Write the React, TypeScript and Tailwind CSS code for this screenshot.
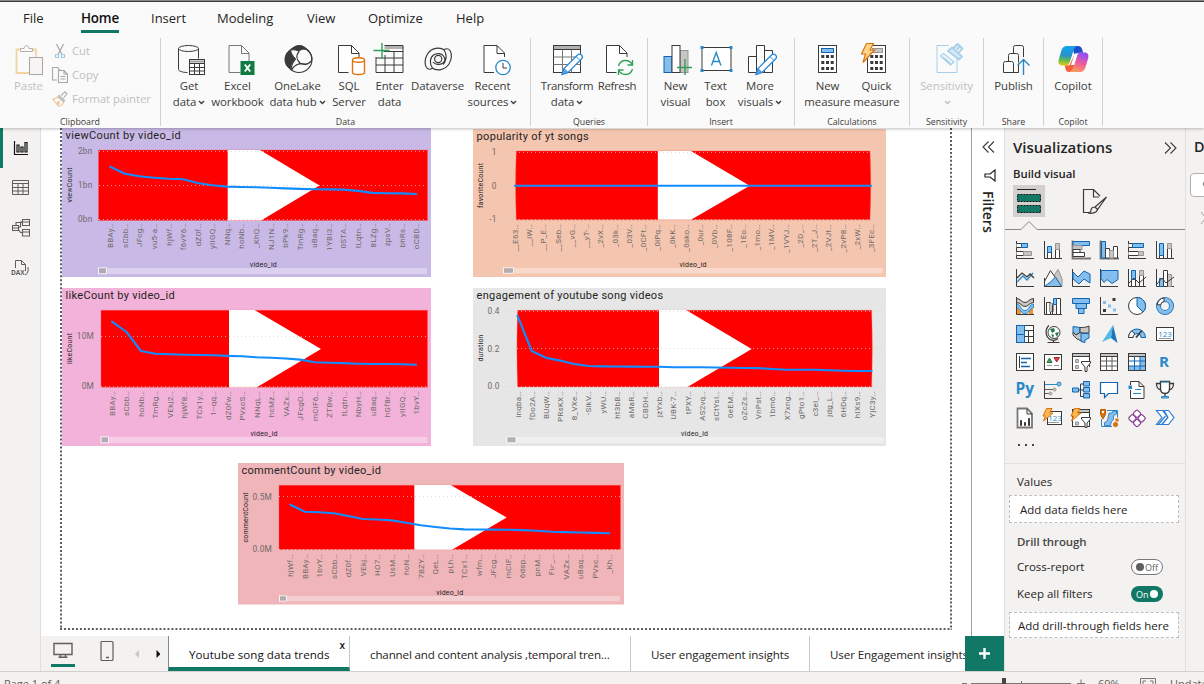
import React from "react";

type Pt = [number, number];

/* ------------------------------------------------------------------ */
/* Charts on the report page                                           */
/* ------------------------------------------------------------------ */

interface ChartProps {
  place: string;
  box: [number, number, number, number];
  bg: string;
  title: string;
  titleLen: number;
  titleAt: Pt;
  plot: string;
  white: string;
  grid: { from: number; to: number; ys: number[] };
  ticks: { x: number; labels: [string, number][] };
  yTitle: { text: string; x: number; y: number; len: number };
  start: number;
  step: number;
  ys: number[];
  cats: string[];
  catTop: number;
  xTitle: Pt;
  scroll: [number, number, number, number, number];
}

const chartFont = "Roboto, 'Open Sans', sans-serif";

function Chart(p: ChartProps) {
  const [x, y, w, h] = p.box;
  const line = p.ys.map((v, i) => `${p.start + i * p.step},${v}`).join(" ");
  const [sx, sy, sw, sh, tw] = p.scroll;
  return (
    <svg className={"absolute " + p.place} width={w} height={h} viewBox={`${x} ${y} ${w} ${h}`} fontFamily={chartFont}>
      <rect x={x} y={y} width={w} height={h} fill={p.bg} />
      <path d={p.plot} fill="#ff0000" stroke="#ff5a5a" strokeOpacity=".6" strokeWidth=".6" />
      <path d={p.white} fill="#fff" />
      <text x={p.titleAt[0]} y={p.titleAt[1]} fontSize="11" fill="#252423" textLength={p.titleLen}>
        {p.title}
      </text>
      {p.grid.ys.map((g) => (
        <line key={g} x1={p.grid.from} x2={p.grid.to} y1={g} y2={g} stroke="#d6d0d0" strokeOpacity=".75" strokeWidth="1" strokeDasharray="1 3" />
      ))}
      {p.ticks.labels.map(([t, ty]) => (
        <text key={t} x={p.ticks.x} y={ty} fontSize="8.3" textAnchor="end" fill="#6f6a69" letterSpacing=".2">
          {t}
        </text>
      ))}
      <text
        transform={`translate(${p.yTitle.x} ${p.yTitle.y}) rotate(-90)`}
        fontSize="7"
        textAnchor="middle"
        fill="#252423"
        textLength={p.yTitle.len}
      >
        {p.yTitle.text}
      </text>
      <polyline points={line} fill="none" stroke="#118dff" strokeWidth="2.100" strokeLinejoin="round" strokeLinecap="round" />
      {p.cats.map((c, i) => (
        <text
          key={c + i}
          transform={`translate(${p.start + i * p.step + 3} ${p.catTop}) rotate(-90)`}
          fontSize="8"
          textAnchor="end"
          fill="#6f6a69"
          letterSpacing=".25"
        >
          {c + "…"}
        </text>
      ))}
      <text x={p.xTitle[0]} y={p.xTitle[1]} fontSize="7" textAnchor="middle" fill="#252423" textLength="27">
        video_id
      </text>
      <rect x={sx} y={sy} width={sw} height={sh} fill="#fff" fillOpacity=".35" />
      <rect x={sx + 0.5} y={sy - 0.2} width={tw} height={sh} fill="#a8a5a8" fillOpacity=".85" stroke="#fff" strokeOpacity=".8" strokeWidth="1" />
    </svg>
  );
}

const charts: ChartProps[] = [
  {
    place: "left-[21px] top-0",
    box: [62, 128, 369, 149.3],
    bg: "#c8b9e6",
    title: "viewCount by video_id",
    titleLen: 115,
    titleAt: [65.6, 139],
    plot: "M98.5 150H427.5V220.5H98.5Z",
    white: "M227.7 150H260L319.5 185.5L261 220.5H227.7Z",
    grid: { from: 99, to: 427, ys: [151.5, 185.5, 219.5] },
    ticks: { x: 92.5, labels: [["2bn", 154.2], ["1bn", 188.2], ["0bn", 222.2]] },
    yTitle: { text: "viewCount", x: 72.3, y: 185, len: 35 },
    start: 110.3,
    step: 14.57,
    ys: [166.7, 173.8, 176.3, 177.7, 178.8, 179.3, 183, 185.2, 186.6, 187, 187.3, 187.7, 188.4, 188.9, 189.2, 189.4, 189.6, 190.9, 192.9, 193.2, 193.4, 194],
    cats: ["BBAy", "sCbb", "JFcg", "vu5-a", "hjWf", "f6vY6", "dZ0f", "yIIGQ", "NNq", "hoNb", "_KhQ", "NJ1N", "bPk9", "TmRg", "uBaq", "1YBI3", "0STA", "tLqtn", "8LZg", "zpsV", "bhRs", "oCBD"],
    catTop: 223,
    xTitle: [263.3, 267],
    scroll: [98, 268, 329, 6, 8],
  },
  {
    place: "left-[432px] top-[1px]",
    box: [473, 129, 413, 148],
    bg: "#f4c5af",
    title: "popularity of yt songs",
    titleLen: 112,
    titleAt: [476.6, 140],
    plot: "M516.3 151H870Q871.5 185 870 219.8H516.3Q514.8 185 516.3 151Z",
    white: "M657.8 151H691L749.7 185.7L691 219.8H657.8Z",
    grid: { from: 503, to: 884, ys: [152.5, 185.5, 219.5] },
    ticks: { x: 496.5, labels: [["1", 155], ["0", 188.8], ["-1", 222]] },
    yTitle: { text: "favoriteCount", x: 483.3, y: 185.5, len: 45 },
    start: 514.8,
    step: 14.25,
    ys: Array(26).fill(185.7),
    cats: ["__E63", "__iW", "__P_E", "__Seb", "__vG", "__yT-", "_2vX", "_03k", "_03V", "_0CFt", "_0iPq", "_0kK", "_0sko", "_0ur", "_0Vb", "_108F", "_1Eo", "_1mo", "_1MV", "_1VYJ", "_2D_", "_2T_J", "_2VJt", "_2vP8", "_2xW", "_3FEc"],
    catTop: 224,
    xTitle: [693, 267],
    scroll: [503, 268, 380, 5.5, 10],
  },
  {
    place: "left-[21px] top-[160px]",
    box: [62, 288, 369, 158],
    bg: "#f2b2d9",
    title: "likeCount by video_id",
    titleLen: 109,
    titleAt: [65.6, 299],
    plot: "M101 310.3H427.5V387.3H101Z",
    white: "M229 310H254.5L321 349L256.5 387.5H229Z",
    grid: { from: 101, to: 427, ys: [336.5, 386.5] },
    ticks: { x: 94, labels: [["10M", 339], ["0M", 389.3]] },
    yTitle: { text: "likeCount", x: 72.3, y: 348.5, len: 31 },
    start: 112,
    step: 14.48,
    ys: [321.7, 332, 351, 353.8, 354.3, 354.7, 355, 355.3, 355.9, 356.3, 357.3, 357.8, 358.5, 359.6, 362.3, 362.8, 363.1, 363.7, 364, 364, 364.2, 364.7],
    cats: ["BBAy", "sCbb", "hoNb", "TmRg", "VEkj2", "hjWf8", "TCx1y", "1--qq", "dZ0fw", "PVxcS", "NNqL", "hcMz", "VAZx", "JFcgO", "mClF6", "ZTBw", "tLqtn", "NbyH", "uBaq", "hGf8r", "yIIGQ", "1bvY"],
    catTop: 391,
    xTitle: [264, 436.3],
    scroll: [100.5, 437, 327, 6, 7.5],
  },
  {
    place: "left-[432px] top-[160px]",
    box: [473, 288, 413, 158],
    bg: "#e6e6e6",
    title: "engagement of youtube song videos",
    titleLen: 186.5,
    titleAt: [476.6, 299],
    plot: "M517.6 310.3H871.6Q873 349 871.6 387H517.6Q516.2 349 517.6 310.3Z",
    white: "M659 310H686L751.7 349L687 387.2H659Z",
    grid: { from: 505, to: 884, ys: [311.5, 348.5, 386.5] },
    ticks: { x: 499.5, labels: [["0.4", 314], ["0.2", 351.8], ["0.0", 389]] },
    yTitle: { text: "duration", x: 483, y: 348, len: 27 },
    start: 517.6,
    step: 14.16,
    ys: [316, 351, 357.7, 360.6, 364, 366, 366.4, 366.5, 366.6, 366.7, 366.8, 367.2, 367.3, 367.3, 367.5, 367.8, 368, 368.1, 369, 369.8, 369.8, 369.8, 370.3, 370.7, 371, 371],
    cats: ["inqba", "fDo2A", "BUqW", "PRsKX", "8_VXe", "-SikV", "yWU", "ht3bB", "aMaR", "CBDH", "jzYxb", "UBK-7", "tPXY", "AS2vq", "sCtYsI", "0eEM", "oZcZs", "VnPst", "1bm6", "X7xng", "gPto1", "c3eI_", "jdg_L", "6HDq", "hIXs9", "YjC3y"],
    catTop: 391,
    xTitle: [694.5, 436.3],
    scroll: [506.5, 437, 377, 6, 9],
  },
  {
    place: "left-[197px] top-[335px]",
    box: [238, 463, 386, 141.5],
    bg: "#efb5b9",
    title: "commentCount by video_id",
    titleLen: 139.5,
    titleAt: [241.5, 474],
    plot: "M279 485.3H620.5V549.5H279Z",
    white: "M414.3 485H450.7L506.7 517.6L452 549.7H414.3Z",
    grid: { from: 279, to: 620, ys: [496.5, 549.5] },
    ticks: { x: 272, labels: [["0.5M", 499.8], ["0.0M", 552]] },
    yTitle: { text: "commentCount", x: 248, y: 517.5, len: 50 },
    start: 290.3,
    step: 14.5,
    ys: [504.7, 511.7, 512.3, 513.3, 516, 519, 519.5, 520.4, 522.8, 525.3, 527, 528.5, 529.4, 529.5, 529.6, 529.8, 530.1, 530.7, 531.8, 532.1, 532.5, 532.9, 533.3],
    cats: ["hjWf", "BBAy", "1bvY", "sCbb", "dZ0f", "VEkj", "HO7", "UsM", "hoN", "7BZY", "QeL", "pLh", "TCx1", "wfm", "JFcg", "mClF", "6dsp", "pnM", "Fu-_", "VAZx", "uBaq", "PVxc", "_Kh"],
    catTop: 554,
    xTitle: [449.7, 595],
    scroll: [279, 596, 341, 5.3, 7],
  },
];

/* ------------------------------------------------------------------ */
/* Ribbon                                                              */
/* ------------------------------------------------------------------ */

function Big({ vb, children }: { vb: string; children: React.ReactNode }) {
  return (
    <svg className="h-8 w-8 shrink-0 overflow-visible" viewBox={vb} fill="none" stroke="#3b3a39" strokeWidth="1">
      {children}
    </svg>
  );
}

const Caret = () => (
  <svg className="mt-[1px] ml-[2px] inline-block h-[5px] w-[7px]" viewBox="0 0 7 5" fill="none" stroke="currentColor" strokeWidth="1.3">
    <path d="M1 1l2.5 2.5L6 1" />
  </svg>
);

function Tool({ w, icon, l1, l2, caret, faded }: { w: string; icon: React.ReactNode; l1: string; l2?: string; caret?: boolean; faded?: boolean }) {
  return (
    <div className={"flex shrink-0 flex-col items-center text-[11.4px] leading-4 tracking-[-0.05px] whitespace-nowrap " + w + (faded ? " text-[#c1c0bf]" : " text-[#3b3a39]")}>
      {icon}
      <div className={"mt-[3px] " + (l1 === "Transform" || l1 === "Refresh" ? "tracking-[-0.35px]" : "")}>{l1}</div>
      <div className="flex h-4 items-center justify-center">
        {l2}
        {caret && <Caret />}
      </div>
    </div>
  );
}

function Group({ w, pad, label, children }: { w: string; pad: string; label: string; children: React.ReactNode }) {
  return (
    <div className={"flex h-[88px] shrink-0 flex-col justify-between border-r border-[#d2d0ce] " + w}>
      <div className={"flex pt-[5px] " + pad}>{children}</div>
      <div className="-mb-px text-center text-[8.8px] leading-[10px] text-[#3b3a39]">{label}</div>
    </div>
  );
}

const doc = (x: number) => (
  <>
    <path d={`M${x} 45.5h13l7 7v20h-20z`} fill="#fff" stroke="none" />
    <path d={`M${x + 10} 72.5h-10v-27h13l7.5 7.5v4M${x + 13} 45.5v8h7.5`} />
  </>
);

const pencil = (x: number, y: number) => (
  <g transform={`translate(${x} ${y})`}>
    <path d="M0 21l2-6L15.500 1.500a2.600 2.600 0 0 1 4 4L6 19z" fill="#fff" stroke="#2b88d8" strokeWidth="1.3" />
    <path d="M0 21l2-6L6 19z" fill="#5ea5de" stroke="#2b88d8" />
    <path d="M14 3l4 4" stroke="#2b88d8" />
  </g>
);

const dots = (x: number, y: number) =>
  [0, 1, 2].map((r) => [0, 1, 2].map((c) => <rect key={`${r}${c}`} x={x + c * 4.7} y={y + r * 6} width="3" height="3" fill="#3b3a39" stroke="none" />));

const GetData = (
  <Big vb="173 43 32 32">
    <ellipse cx="188.500" cy="48.500" rx="10" ry="3" />
    <path d="M178.500 48.500v21c0 1.500 4 3 9 3M198.500 48.500v10" />
    <rect x="189.500" y="59.500" width="15" height="15" fill="#fff" />
    <path d="M190 61.500h14" stroke="#a19f9d" strokeWidth="2" />
    <path d="M189.500 63.500h15M189.500 67.500h15M189.500 71h15M194.500 63.500v11M199.500 63.500v11" />
  </Big>
);
const Excel = (
  <Big vb="221.500 43 32 32">
    <path d="M240 72.500h-11.500v-27h12.500l7.500 7.500v8M241 45.500v8h7.500" stroke="#797775" />
    <rect x="240" y="61" width="14" height="14" fill="#107c41" stroke="none" />
    <path d="M244.300 64.500l5.400 7M249.700 64.500l-5.400 7" stroke="#fff" strokeWidth="1.900" />
  </Big>
);
const OneLake = (
  <Big vb="281.500 43 32 32">
    <circle cx="298.500" cy="59.500" r="13" strokeWidth="1.100" />
    <path d="M290.500 50c2-3 5-4.500 8.500-4.500 3 0 6 1.500 7.500 4.500-3-1.500-6-1-8 1.500-2-1.500-5-2-8-1.500z" fill="#3b3a39" />
    <path d="M290 50c-4 2-5.500 6-5.500 9.500 0 4 2 8 5.500 9 0-4 1.500-7 5-9.500-3-3.500-4.500-6-5-9z" fill="#3b3a39" />
    <path d="M298.500 51.500c-3 3.500-3 8 1.500 12M306.500 50c4 3 5.500 6.500 4.500 11-4 4-8 4-11 2.500M295 59c-3 3-4 6-4.500 10.500M291 70.500c2-5 7-8 14-6.500" strokeWidth="1.200" />
  </Big>
);
const Sql = (
  <Big vb="333 43 32 32">
    {doc(338.5)}
    <path d="M352.500 60v12.500c0 1 2.500 2 6 2s6-1 6-2V60" fill="#fff" stroke="#e07412" strokeWidth="1.400" />
    <ellipse cx="358.500" cy="60" rx="6" ry="2.200" fill="#fff" stroke="#e07412" strokeWidth="1.400" />
  </Big>
);
const Enter = (
  <Big vb="373.500 43 32 32">
    <rect x="384" y="46" width="19" height="3" fill="#b3b0ad" stroke="none" />
    <path d="M384 45.500h18.500v27h-27V57M383 51.500h19.500M375.500 58h27M375.500 65h27M384.500 55v17.500M393.500 51.500v21" />
    <path d="M381.500 43v16M373 50.500h16" stroke="#2f9e57" strokeWidth="1.400" />
  </Big>
);
const Dataverse = (
  <Big vb="421.500 43 32 32">
    <g strokeWidth="1.200">
      <path d="M444 50c-5-3.500-13-2-17 4-3 5-3 10.500-1 13.500 1.500 2 4 2 6 .8" />
      <path d="M431.500 68c5 3.500 13 2 17-4 3-5 3-10.500 1-13.500-1.500-2-4-2-6-.8" />
      <path d="M432 68c-3-4-3-10 1-13 3.500-2.500 8-1.500 10 1 2 3 1.500 6.500-.5 8.500" />
      <path d="M443.500 50c3 4 3 10-1 13-3.500 2.500-8 1.500-10-1" />
      <circle cx="437.700" cy="59" r="3.600" />
    </g>
  </Big>
);
const Recent = (
  <Big vb="476.500 43 32 32">
    {doc(483.5)}
    <circle cx="502.500" cy="67.500" r="7.200" fill="#fff" stroke="#2b88c8" strokeWidth="1.300" />
    <path d="M502.500 63v5h4" />
  </Big>
);
const Transform = (
  <Big vb="551 43 32 32">
    <rect x="553.500" y="45.500" width="27" height="27" fill="#fff" />
    <rect x="554" y="46" width="26" height="3" fill="#b3b0ad" stroke="none" />
    <path d="M553.500 49.500h27" />
    <path d="M553.500 57h27M553.500 64.500h27M562.500 49.500v23M571.500 49.500v23" stroke="#797775" />
    {pencil(562, 53.5)}
  </Big>
);
const Refresh = (
  <Big vb="601 43 32 32">
    {doc(606.5)}
    <circle cx="625.500" cy="67.500" r="8" fill="#fafafa" stroke="none" />
    <path d="M618.500 66c1-3.500 4-5.500 7-5.500 3 0 5.500 1.500 7 4.500M632.500 60v5h-5M632.500 69c-1 3.500-4 5.500-7 5.500-3 0-5.500-1.500-7-4.500M618.500 75v-5h5" stroke="#2f9e57" strokeWidth="1.300" />
  </Big>
);
const NewVisual = (
  <Big vb="659.500 43 32 32">
    <rect x="663.500" y="56.500" width="8" height="16" fill="#83beec" stroke="#1264b0" />
    <rect x="679.500" y="50.500" width="8" height="22" fill="#c8c6c4" stroke="#979593" />
    <rect x="671.500" y="45.500" width="8" height="27" fill="#fff" />
    <path d="M684.500 59v16M676.500 67.500h15" stroke="#2f9e57" strokeWidth="1.400" />
  </Big>
);
const TextBox = (
  <Big vb="699.500 43 32 32">
    <rect x="701.500" y="47.500" width="29" height="23" fill="#fff" />
    <path d="M711 65.500l4.700-13 4.700 13M712.500 61.500h6.500" stroke="#2b88c8" strokeWidth="1.400" />
    <path d="M700 46h3v3h-3zM729 46h3v3h-3zM700 69h3v3h-3zM729 69h3v3h-3z" fill="#2b88c8" stroke="none" />
  </Big>
);
const MoreVisuals = (
  <Big vb="744 43 32 32">
    <path d="M748.500 56.500h8v16h-8zM764.500 50.500h8v22h-8zM756.500 45.500h8v27h-8z" fill="#fff" />
    {pencil(756, 53.5)}
  </Big>
);
const Calc = (
  <Big vb="812 43 32 32">
    <rect x="818.500" y="45.500" width="18" height="27" fill="#fff" />
    <rect x="821.500" y="48.500" width="12" height="4" fill="#83beec" stroke="#1264b0" />
    {dots(821.3, 55)}
  </Big>
);
const Quick = (
  <Big vb="861 43 32 32">
    <rect x="867.500" y="45.500" width="18" height="27" fill="#fff" />
    <rect x="872.500" y="48.500" width="10" height="4" fill="#c8c6c4" stroke="#979593" />
    {dots(870.3, 55)}
    <path d="M866.500 43.500h7l-3.500 6.500h4.500L863 62.500l2.500-8.500h-4z" fill="#ffd68c" stroke="#d9730d" strokeWidth="1.200" />
  </Big>
);
const Sensitivity = (
  <Big vb="930.500 43 32 32">
    <g stroke="#a6cfe8">
      <path d="M948 45.500h-11.500v27h20v-14" />
      <path d="M940 56l3-2.500 10.500 8.500-3.500 3zM942.500 57l8 6.500" strokeWidth="1.200" />
      <path d="M947.500 51l4-3.500 10 9-3 3zM953 48l4-4 2.500 2-3 4M958 53l4-4.500-2-2" strokeWidth="1.800" fill="#d6eaf6" />
    </g>
  </Big>
);
const Publish = (
  <Big vb="997 43 32 32">
    <path d="M1012.500 53.500v-6q0-2 2-2h6q2 0 2 2V57M1007.500 61.500v-6q0-2 2-2h6q2 0 2 2v7" />
    <path d="M1002.500 72.500v-9q0-2 2-2h6q2 0 2 2v9zM1012.500 72.500h5v-9" fill="#fafafa" />
    <path d="M1022.500 75V60M1016.500 65.500l6-6 6 6" stroke="#2b88c8" strokeWidth="1.400" />
  </Big>
);
const Copilot = (
  <Big vb="1056.500 43 32 32">
    <defs>
      <linearGradient id="ca" x1=".1" y1="0" x2="0" y2="1">
        <stop offset=".1" stopColor="#15a0e8" />
        <stop offset=".45" stopColor="#2b8fc9" />
        <stop offset=".7" stopColor="#5fbb52" />
        <stop offset="1" stopColor="#f6c90e" />
      </linearGradient>
      <linearGradient id="cb" x1=".4" y1="0" x2=".1" y2="1">
        <stop offset="0" stopColor="#9a4df0" />
        <stop offset=".45" stopColor="#ec5a9c" />
        <stop offset="1" stopColor="#ffa552" />
      </linearGradient>
    </defs>
    <g stroke="none">
      <path d="M1071 46h6.500c2.500 0 3.500 1.200 4.200 3.500l1 3.200h-3.500c-2.500 0-3.500 1-4.500 3.800z" fill="#1f4fc9" />
      <path d="M1064 65.300h5l5-10.800 1 8-2.500 6.500c-1 2-2 3-4 3-2.500 0-3-1.500-3.500-3.500z" fill="#f4603a" />
      <path d="M1067 46h9c-1.500.8-2.300 2.300-3 4.500l-3.500 11c-1 3-2 3.900-4.500 3.900h-3.200c-3.500 0-4.500-2.400-3.500-5.900l2.300-8c1.200-4 2.700-5.500 6.400-5.500z" fill="url(#ca)" />
      <path d="M1080.500 52.500h3.500c3.500 0 4.600 2.400 3.600 5.900l-2.400 8c-1.200 4-2.700 5.600-6.400 5.600h-9c1.500-.8 2.300-2.300 3-4.500l3.300-11c1-3 2-4 4.400-4z" fill="url(#cb)" />
      <path d="M1074.300 53.500h2.900l-3.500 11.500h-3.200z" fill="#fff" />
    </g>
  </Big>
);

const PasteIcon = (
  <svg className="h-[32px] w-[30px]" viewBox="15 43 30 32" fill="none" strokeWidth="1">
    <path d="M22 49.500h-4.500v23.500H30M32 49.500h5V57" stroke="#f3d3a4" strokeWidth="1.800" />
    <path d="M21.500 51.500v-3h3.500c.5-4 4.500-4 5 0h3.500v3z" stroke="#b3b0ad" fill="#fafafa" />
    <rect x="30.500" y="57.500" width="13" height="17" fill="#f6f5f4" stroke="#a9a7a5" />
  </svg>
);
const CutIcon = (
  <svg className="h-4 w-4" viewBox="0 0 16 16" fill="none" stroke="#a9a7a5" strokeWidth="1.200">
    <path d="M4.500 1l5.500 10.500M11.500 1L6 11.500" />
    <path d="M3.500 11.500h3v3h-3zM9.500 11.500h3v3h-3z" stroke="#9fcbe8" />
  </svg>
);
const CopyIcon = (
  <svg className="h-4 w-4" viewBox="0 0 16 16" fill="none" stroke="#a9a7a5" strokeWidth="1.100">
    <path d="M5 13H.500V.500h5L8 3" />
    <path d="M6.500 3.500H12L15.500 7v8.500h-9zM12 3.500V7h3.500M8.500 9.500h5M8.500 12h5" />
  </svg>
);
const PainterIcon = (
  <svg className="h-4 w-4" viewBox="0 0 16 16" fill="none" stroke="#b3b0ad" strokeWidth="1.100">
    <path d="M9 4.500L13 .800l2 2-3.500 4.200M6.500 4l6.500 6M5.500 5.500L12 11" />
    <path d="M5.500 5.500C4.500 7.500 3 8 .800 8l5.500 7.200c3 0 4.500-2 5.700-4.200" stroke="#f2c39a" />
    <path d="M4 11.500l4-2-1 5z" fill="#f2c39a" stroke="none" />
  </svg>
);

/* ------------------------------------------------------------------ */
/* Visual gallery icons (18 × 18)                                      */
/* ------------------------------------------------------------------ */

const D = "#3b3a39";
const B = "#1264b0";
const L = "#83beec";
const G = "#c8c6c4";
const M = "#979593";

const axis = <path d="M.500 0v17.500H18" stroke={D} />;
const table = (
  <>
    <rect x=".500" y=".500" width="17" height="17" fill="#fff" stroke={D} />
    <rect x="1" y="1" width="16" height="2.500" fill={G} />
    <path d="M.500 3.500h17" stroke={D} />
  </>
);
const bolt = <path d="M2.500-.500h5.500L5.500 4H9L-.500 12l2-5H-1z" fill="#ffb84d" stroke="#d9730d" />;
const funnel = <path d="M9.500 8.500h9v1.500l-3.500 4v4.500h-2V14l-3.500-4z" fill="#fff" stroke={D} />;

const gallery: React.ReactNode[] = [
  <>{axis}<path d="M.500 2.500h5v4h-5M.500 10.500h8v4h-8" fill="#fff" stroke={D} /><path d="M5.500 2.500h6v4h-6z" fill={L} stroke={B} /><path d="M7.500 10.500h8v4h-8z" fill={G} stroke={M} /></>,
  <>{axis}<path d="M3.500 11.500h4v6h-4zM11.500 8.500h4v9h-4z" fill="#fff" stroke={D} /><path d="M3.500 5.500h4v6h-4z" fill={L} stroke={B} /><path d="M11.500 2.500h4v6h-4z" fill={G} stroke={M} /></>,
  <><path d="M.500-.5v18H19" stroke="#797775" strokeWidth="1.800" /><path d="M1 .5h16.500v4H1z" fill={L} stroke={B} /><path d="M1 4.500h9v4H1z" fill={G} stroke={M} /><path d="M1 8.500h7v3H1zM1 11.500h11.500v4H1z" fill="#fff" stroke={D} /></>,
  <><path d="M.500-.5v18H19" stroke="#797775" strokeWidth="1.800" /><path d="M1.500.5h4v16.500h-4z" fill={L} stroke={B} /><path d="M5.500 7.500h4v9.500h-4zM13.500 5.500h4v11.500h-4z" fill="#fff" stroke={D} /><path d="M9.500 9.500h4v7.500h-4z" fill={G} stroke={M} /></>,
  <>{axis}<path d="M.500 2.500h5v4h-5M.500 10.500h11v4h-11" fill="#fff" stroke={D} /><path d="M4.500 2.500h11v4h-11z" fill={L} stroke={B} /><path d="M10.500 10.500h5v4h-5z" fill={G} stroke={M} /></>,
  <>{axis}<path d="M3.500 14.500h4v3h-4zM11.500 7.500h4v10h-4z" fill="#fff" stroke={D} /><path d="M3.500 2.500h4v12h-4z" fill={L} stroke={B} /><path d="M11.500 2.500h4v5h-4z" fill={G} stroke={M} /></>,
  <>{axis}<path d="M1 13l6-6 4 4 6-7" stroke="#2b88c8" strokeWidth="1.400" /><path d="M1 9l5-5 5 4 3-3 4 4" stroke={D} strokeWidth="1.300" /></>,
  <><path d="M9 8l5-7.500 4 9v8" fill={G} stroke={M} /><path d="M.500 12.500l6-11 6 9-5 7H.500z" fill="#fff" stroke={D} /><path d="M.500 17.500l6-4.500 5-5 6 9.500z" fill={L} stroke={B} /><path d="M.500 9v8.500h17" stroke={D} /></>,
  <>{axis}<path d="M1 3l5 5 6-6 6 3v9l-6-4-5 5-6-5z" fill={L} stroke={B} /></>,
  <>{axis}<path d="M1 1.500h17v9l-6 4-5-4-3 3-3-4z" fill={L} stroke={B} /></>,
  <>{axis}<path d="M3.500 10.500h4v7h-4zM11.500 6.500h4v11h-4z" fill="#fff" stroke={D} /><path d="M3.500 1.500h4v9h-4z" fill={L} stroke={B} /><path d="M11.500 1.500h4v5h-4z" fill={G} stroke={M} /><path d="M1 14l5-5 5 5 7-6" stroke={D} /></>,
  <>{axis}<path d="M3.500 9.500h4v8h-4z" fill={L} stroke={B} /><path d="M11.500 5.500h4v12h-4z" fill={G} stroke={M} /><path d="M7.500 1.500h4v16h-4z" fill="#fff" stroke={D} /><path d="M1 15l5-6 4 5 8-6" stroke={D} /></>,
  <><path d="M1 11h4v6H1zM13 11h4v6h-4z" fill="#f0932b" /><path d="M.500 1.500c4 0 5 4 8.500 4s4.500-4 8.500-4v4c-4 0-5 4-8.500 4s-4.500-4-8.500-4z" fill={G} stroke={D} /><path d="M.500 7c4 0 4.500 6.500 8.500 6.500S13.500 7 17.500 7v3.500c-3 0-4.500 6.500-8.500 6.500S3.500 10.500.500 10.500z" fill={L} stroke="#2b88c8" /><path d="M.500 0v17.500H18" stroke={D} /></>,
  <>{axis}<path d="M2.500 5.500h4v12h-4zM12.500 1.500h4v16h-4z" fill="#fff" stroke={D} /><path d="M5.500 6.500h4v8h-4z" fill={G} stroke={M} /><path d="M9.500 1.500h3v6h-3z" fill={L} stroke={B} /><path d="M8.500 7.500v10" stroke={D} /></>,
  <path d="M.500 1.500h17v5H.500zM4 6.500h10.500v5H4zM6.500 11.500h5.500v5H6.500z" fill={L} stroke={B} />,
  <>{axis}<path d="M12.500 1h3v3h-3zM3 12h3v3H3z" fill={D} /><path d="M3 4h3v3H3zM8 7.500h3v3H8zM13 11.500h3v3h-3z" fill={L} /></>,
  <><circle cx="9" cy="9" r="8.500" fill="#fff" stroke={D} /><path d="M9 .500v8.500l6 6A8.500 8.500 0 0 0 9 .500z" fill={L} stroke={B} /></>,
  <><circle cx="9" cy="9" r="6.500" fill="none" stroke={B} strokeWidth="5" /><circle cx="9" cy="9" r="6.500" fill="none" stroke={L} strokeWidth="3.500" /><path d="M1.200 7.500A8 8 0 0 1 8 1v3.500A4.500 4.500 0 0 0 4.500 8z" fill="#fff" stroke={D} /></>,
  <><rect x=".500" y=".500" width="17" height="17" fill="#fff" stroke={D} /><path d="M.500.500h8v9h-8zM.500 9.500h8v8h-8z" fill={L} stroke={B} /><path d="M8.500 5.500h9M12.500 5.500v12M8.500 11.500h9" stroke={D} /></>,
  <><circle cx="10" cy="7.500" r="6" fill="#fff" stroke={D} /><path d="M6 4l4-1 1 3-3 2zM11 8l4-1-2 5zM7 9l3 1-1 3z" fill="#217a45" /><path d="M5 .500C1 4 1 11 6 14.500c3 1.500 6 .800 8-1M9.500 15v2.500M3.500 17.500h12" stroke={D} strokeWidth="1.200" /></>,
  <><path d="M1 1.500l7 1v5l-4 2.500-3-3z" fill={L} stroke={B} /><path d="M8 2.500c3 0 6 0 9-1.500v7H9.500L8 7z" fill={G} stroke={D} /><path d="M1 7l3 3 4-2.500 3 1v8L5 14l-4-4z" fill={G} stroke={D} /><path d="M9 8.500h8v4.500l-4 2v2.500l-4-1z" fill={L} stroke={B} /></>,
  <><path d="M13 0L2 17l9-4z" fill="#55b9e8" /><path d="M13 0l-2 13 6.500 5z" fill="#1b75bb" /></>,
  <><path d="M.500 12.500a8.500 8.500 0 0 1 17 0H13a4 4 0 0 0-8 0z" fill={L} stroke={B} /><path d="M.500 12.500a8.500 8.500 0 0 1 3-6.500L7 9c-1 .500-2 2-2 3.500z" fill="#fff" stroke={D} /><path d="M8 12.500l6-7" stroke={D} strokeWidth="1.800" /></>,
  <><rect x=".500" y="2.500" width="17" height="13" fill="#fff" stroke={D} /><text x="9" y="11.700" fontSize="8" fill="#2b88c8" textAnchor="middle" fontFamily="Open Sans">123</text><path d="M3 13.500h12" stroke={M} /></>,
  <><rect x=".500" y=".500" width="17" height="17" fill="#fff" stroke={D} /><path d="M3.500 3v12" stroke={D} /><path d="M5 5.500h10M5 9.500h6M5 13.500h9" stroke={B} strokeWidth="1.500" /></>,
  <><rect x=".500" y="1.500" width="17" height="15" fill="#fff" stroke={D} /><path d="M3 9.500l2.500-4.500 2.500 4.500z" fill="#4f9b5f" stroke="#217a45" /><path d="M10 4.500h5.500L12.700 9z" fill="#e0444d" stroke="#a4262c" /><path d="M3 12.500h5M10 12.500h5" stroke={M} /></>,
  <>{table}<path d="M3.500 6.500h3v3h-3zM3.500 12.500h3v3h-3z" fill={G} stroke={M} /><path d="M10 14h9v5h-9z" fill="#f3f2f1" />{funnel}</>,
  <>{table}<path d="M.500 8h17M.500 13h17M6.500 3.500v14M12 3.500v14" stroke="#605e5c" /></>,
  <>{table}<path d="M12 4h5v13h-5zM1 13h16v4H1z" fill={L} /><path d="M.500 8h17M.500 13h17M6.500 3.500v14M12 3.500v14" stroke={B} /><path d="M.500.500h17v17H.500z" stroke={D} /></>,
  <text x="3" y="14" fontSize="15" fontWeight="700" fill="#2b88c8" fontFamily="Open Sans" textLength="10" lengthAdjust="spacingAndGlyphs">R</text>,
  <text x="-.500" y="13" fontSize="15.500" fontWeight="700" fill="#2b88c8" fontFamily="Open Sans" textLength="18.500" lengthAdjust="spacingAndGlyphs">Py</text>,
  <>{axis}<path d="M1 3.500h12M1 8.500h8M1 12.500h4" stroke="#605e5c" /><path d="M1 3.500h12" stroke="#2b88c8" /><circle cx="15" cy="3" r="2" fill={L} stroke="#2b88c8" /><circle cx="10.500" cy="8.500" r="1.500" fill={G} stroke={M} /><circle cx="6.500" cy="12.500" r="1.500" fill={G} stroke={M} /></>,
  <><path d="M6 9h5M8.500 3v12.500M8.500 3h3M8.500 15.500h3" stroke={D} /><path d="M.500 7h6v4h-6zM11.500.500h6v4.500h-6zM11.500 6.500h6v4.500h-6zM11.500 12.500h6v4.500h-6z" fill={L} stroke={B} /></>,
  <path d="M.500 1.500h17v11H8.500l-4 4v-4h-4z" fill="#fff" stroke={B} strokeWidth="1.200" />,
  <><path d="M2.500 4V.500h8.500l5 5v12h-13.500V9M11 .500v5h5" fill="#fff" stroke={D} /><path d="M.500 4.500h3.500v3.500H.500z" fill="#2b88c8" /><path d="M7 8.500h6M5 12.500h8" stroke="#2b88c8" /></>,
  <><path d="M4.500.500h9v7c0 4-2 5-4.500 5s-4.500-1-4.500-5z" fill="#fff" stroke={D} strokeWidth="1.300" /><path d="M4.500 2.500h-4c0 4 1 5.500 4.500 6.500M13.500 2.500h4c0 4-1 5.500-4.500 6.500M9 12.500v3" stroke={D} strokeWidth="1.300" /><path d="M5.500 15.500h7v1.500h-7z" fill={L} stroke="#2b88c8" /><path d="M4.500 1h9" stroke="#2b88c8" /></>,
  <><path d="M1.500-.5h9.500l5 5v14H1.500z" fill="#fff" stroke="#797775" strokeWidth="1.800" /><path d="M11 0v5h5" stroke={D} /><path d="M4.500 11.500h1v5h-1zM8.500 13.500h1v3h-1zM12.500 9.500h1v7h-1z" fill={D} stroke={D} /></>,
  <><rect x="3.500" y="2.500" width="14" height="13" fill="#fff" stroke={D} /><text x="11" y="12" fontSize="8" fill="#2b88c8" textAnchor="middle" fontFamily="Open Sans">123</text><path d="M4 13.500h11" stroke={M} />{bolt}</>,
  <>{table}<path d="M3.500 13h3v3h-3z" fill={G} stroke={M} />{funnel}{bolt}</>,
  <><path d="M7 1.500h10.500v7M12 17.500H1.500V10" fill="none" stroke="#2b88c8" /><path d="M9 4h3l1-2h3.500v3l-3 1.500v4l-2 2-1 4H4.500v-3l3-2z" fill={L} stroke={B} strokeWidth=".700" /><path d="M.500.500h5v5L3 10 .500 5.500z" fill="#d9730d" stroke="#b85c00" /><circle cx="3" cy="3" r="1.200" fill="#fff" /><circle cx="15.500" cy="15.500" r="2.500" fill="#d9730d" /><path d="M15.500 9.500h3v3h-3z" fill="#d9730d" /></>,
  <g stroke="#8b3f96" strokeWidth="1.200" fill="#fff"><rect x="3" y="3" width="6" height="6" rx="1.500" transform="rotate(45 9 9)" /><rect x="9.500" y="3" width="6" height="6" rx="1.500" transform="rotate(45 9 9)" /><rect x="3" y="9.500" width="6" height="6" rx="1.500" transform="rotate(45 9 9)" /><rect x="9.500" y="9.500" width="6" height="6" rx="1.500" transform="rotate(45 9 9)" /></g>,
  <g stroke="#2b7cd3" strokeWidth="1.200" fill="#fff"><path d="M.500 1.500h6L12 8.500l-6 7H.500L6 8.500z" /><path d="M8 1.500h4.500L18 8.500l-5.500 7H6l6-7z" /><path d="M2.500 15.500l7-8.500" /></g>,
];

function Gallery() {
  return (
    <div className="grid grid-cols-[repeat(6,28px)] auto-rows-[28px] pt-[11px] pl-[11px]">
      {gallery.map((g, i) => (
        <svg key={i} className="h-[18px] w-[18px] overflow-visible" viewBox="0 0 18 18" fill="none">
          {g}
        </svg>
      ))}
    </div>
  );
}

/* ------------------------------------------------------------------ */

function Ribbon() {
  return (
    <header className="relative z-10 h-[128px] shrink-0 bg-[#fafafa] shadow-[0_1px_3px_rgba(0,0,0,0.25)]">
      <div className="h-[2px] border-b border-[#3b3a39] bg-[#8a8886]" />
      <nav className="flex h-[36px] items-start pl-[23px] text-[13px] leading-[32px] whitespace-nowrap text-[#252423]">
        <span className="w-[58px]">File</span>
        <span className="mr-[32px] h-[31px] w-[38px] border-b-[3px] border-[#117865] text-[13.4px] font-semibold tracking-[-0.2px] text-[#111]">Home</span>
        <span className="w-[66px]">Insert</span>
        <span className="w-[90px]">Modeling</span>
        <span className="w-[61px]">View</span>
        <span className="w-[88px]">Optimize</span>
        <span>Help</span>
      </nav>
      <div className="flex">
        <div className="flex h-[88px] w-[161px] flex-col justify-between border-r border-[#d2d0ce] text-[11.4px] text-[#c1c0bf]">
          <div className="flex">
            <div className="flex w-[52px] flex-col items-center pt-[5px] pl-[5px]">
              {PasteIcon}
              <span className="mt-[3px] leading-4">Paste</span>
            </div>
            <div className="flex flex-col gap-[8px] pt-[5px] tracking-[-0.05px] whitespace-nowrap">
              <div className="flex items-center gap-1 leading-4">{CutIcon}Cut</div>
              <div className="flex items-center gap-1 leading-4">{CopyIcon}Copy</div>
              <div className="flex items-center gap-1 leading-4">{PainterIcon}Format painter</div>
            </div>
          </div>
          <div className="-mb-px text-center text-[8.8px] leading-[10px] text-[#3b3a39]">Clipboard</div>
        </div>
        <Group w="w-[370px]" pad="pl-[4px]" label="Data">
          <Tool w="w-[48px]" icon={GetData} l1="Get" l2="data" caret />
          <Tool w="w-[49px]" icon={Excel} l1="Excel" l2="workbook" />
          <Tool w="w-[71px]" icon={OneLake} l1="OneLake" l2="data hub" caret />
          <Tool w="w-[32px]" icon={Sql} l1="SQL" l2="Server" />
          <Tool w="w-[49px]" icon={Enter} l1="Enter" l2="data" />
          <Tool w="w-[47px]" icon={Dataverse} l1="Dataverse" />
          <Tool w="w-[63px]" icon={Recent} l1="Recent" l2="sources" caret />
        </Group>
        <Group w="w-[117px]" pad="pl-[4px]" label="Queries">
          <Tool w="w-[64px]" icon={Transform} l1="Transform" l2="data" caret />
          <Tool w="w-[36px]" icon={Refresh} l1="Refresh" />
        </Group>
        <Group w="w-[147px]" pad="pl-[7px]" label="Insert">
          <Tool w="w-[41px]" icon={NewVisual} l1="New" l2="visual" />
          <Tool w="w-[39px]" icon={TextBox} l1="Text" l2="box" />
          <Tool w="w-[50px]" icon={MoreVisuals} l1="More" l2="visuals" caret />
        </Group>
        <Group w="w-[115px]" pad="pl-[8px]" label="Calculations">
          <Tool w="w-[49px]" icon={Calc} l1="New" l2="measure" />
          <Tool w="w-[49px]" icon={Quick} l1="Quick" l2="measure" />
        </Group>
        <Group w="w-[74px]" pad="justify-center" label="Sensitivity">
          <Tool w="w-[60px]" icon={Sensitivity} l1="Sensitivity" caret faded />
        </Group>
        <Group w="w-[60px]" pad="justify-center" label="Share">
          <Tool w="w-[50px]" icon={Publish} l1="Publish" />
        </Group>
        <Group w="w-[59px]" pad="justify-center" label="Copilot">
          <Tool w="w-[50px]" icon={Copilot} l1="Copilot" />
        </Group>
      </div>
    </header>
  );
}

function Rail() {
  return (
    <aside className="flex w-[41px] shrink-0 flex-col border-r border-[#e1dfdd] bg-[#f3f2f1]">
      <div className="flex h-[40px] items-center border-l-[3px] border-[#117865] pl-[10px]">
        <svg className="h-4 w-4" viewBox="0 0 16 16" fill="none" stroke="#111" strokeWidth="1.200">
          <path d="M1.500 1v13.500H15M4 5h2v7H4zM8 7h2v5H8zM12 2.500h2V12h-2z" />
        </svg>
      </div>
      <div className="flex h-[38px] items-center pl-[12px]">
        <svg className="h-[17px] w-[17px]" viewBox="0 0 17 17" fill="none" stroke="#605e5c">
          <path d="M.500 1.500h16v14H.500zM.500 4.500h16M.500 8.500h16M.500 12h16M6 4.500v11M11 4.500v11" />
        </svg>
      </div>
      <div className="mt-[2px] flex h-[40px] items-center pl-[12px]">
        <svg className="h-[18px] w-[18px]" viewBox="0 0 18 18" fill="none" stroke="#605e5c" strokeWidth="1.100">
          <path d="M.500 6.500h6v5h-6zM.500 9h6M10.500.500h7v6h-7zM10.500 3h7M10.500 10.500h7v6.500h-7zM10.500 13h7M6.500 8h2V3h2M6.500 10.500l2 3h2M4 6V3.500h6" />
        </svg>
      </div>
      <div className="flex h-[40px] items-center pl-[11px]">
        <svg className="h-[18px] w-[18px] overflow-visible" viewBox="0 0 18 18" fill="none" stroke="#605e5c">
          <path d="M4.500 9V1.500h6l4 4V12M10.500 1.500v4h4M17 8c.500 4 0 7-3 8" />
          <text x="0" y="15.800" fontSize="6.500" fontWeight="700" fill="#605e5c" stroke="none" fontFamily="Open Sans" textLength="13.500">DAX</text>
        </svg>
      </div>
    </aside>
  );
}

function PageTabs() {
  return (
    <div className="relative flex h-[35px] shrink-0 bg-white text-[11.6px] leading-[37px] whitespace-nowrap text-[#252423]">
      <div className="flex w-[127px] shrink-0 items-start bg-[#f3f2f1]">
        <div className="ml-[10px] flex h-[31px] w-[24px] flex-col items-center justify-between border-b-[3px] border-[#117865] pt-[6px]">
          <svg className="h-[17px] w-[20px]" viewBox="0 0 20 17" fill="none" stroke="#605e5c" strokeWidth="1.400">
            <path d="M1 1.500h18v11H1zM7.500 12.500v2.500M12.500 12.500v2.500M5.500 15.300h9" />
          </svg>
        </div>
        <svg className="mt-[4px] ml-[25px] h-[22px] w-[14px]" viewBox="0 0 14 22" fill="none" stroke="#605e5c" strokeWidth="1.200">
          <rect x="1" y="1.500" width="12" height="19" rx="1" />
          <path d="M6 17.500h3" strokeWidth="1.500" />
        </svg>
        <svg className="mt-[14px] ml-[20px] h-[8px] w-[26px]" viewBox="0 0 26 8">
          <path d="M5 0v8L1 4z" fill="#c8c6c4" />
          <path d="M22.500 0v8l4-4z" fill="#111" />
        </svg>
      </div>
      <div className="relative w-[182px] shrink-0 border-r border-l border-b-[4px] border-r-[#c8c6c4] border-b-[#117865] border-l-[#8a8886] pl-[20px] tracking-[0.04px] text-[#111]">
        Youtube song data trends
        <span className="absolute top-[3px] right-[4px] text-[10px] leading-3 font-semibold">x</span>
      </div>
      <div className="w-[281px] shrink-0 border-r border-[#c8c6c4] pl-[20px] tracking-[-0.16px]">channel and content analysis ,temporal tren...</div>
      <div className="w-[179px] shrink-0 border-r border-[#c8c6c4] pl-[20px] tracking-[-0.09px]">User engagement insights</div>
      <div className="w-[155px] shrink-0 pl-[20px] tracking-[-0.1px]">User Engagement insights</div>
      <div className="relative flex flex-1 items-center justify-center bg-[#117865]">
        <svg className="h-[11px] w-[11px]" viewBox="0 0 11 11" stroke="#fff" strokeWidth="2.400">
          <path d="M5.500 0v11M0 5.500h11" />
        </svg>
      </div>
    </div>
  );
}

const Chevrons = ({ flip }: { flip?: boolean }) => (
  <svg className={"h-[12px] w-[13px] " + (flip ? "rotate-180" : "")} viewBox="0 0 13 12" fill="none" stroke="#3b3a39" strokeWidth="1.100">
    <path d="M6.500 .500L1 6l5.500 5.500M12 .500L6.500 6l5.500 5.500" />
  </svg>
);

function FiltersPane() {
  return (
    <div className="flex w-[33px] shrink-0 flex-col items-center border-l border-[#a19f9d] bg-white">
      <div className="mt-[13px]">
        <Chevrons />
      </div>
      <svg className="mt-[16px] ml-[3px] h-[13px] w-[12px]" viewBox="0 0 12 13" fill="none" stroke="#252423" strokeWidth="1.200">
        <path d="M11 1v11L6 8H1V5h5z" />
      </svg>
      <span className="mt-[9px] text-[14px] leading-5 font-semibold text-[#252423] [writing-mode:vertical-rl]">Filters</span>
    </div>
  );
}

function VizPane() {
  return (
    <section className="flex w-[182px] shrink-0 flex-col border-r border-l border-[#e1dfdd] bg-[#f3f2f1] text-[#252423]">
      <div className="flex h-[39px] items-center justify-between pr-[8px] pl-[8px]">
        <h2 className="text-[15px] font-semibold">Visualizations</h2>
        <Chevrons flip />
      </div>
      <div className="h-[18px] pl-[8px] text-[11.4px] leading-[14px] font-semibold tracking-[-0.05px]">Build visual</div>
      <div className="flex h-[33px] pl-[8px]">
        <div className="h-8 w-8 bg-[#d2d0ce]">
          <svg className="h-8 w-8" viewBox="0 0 32 32" fill="none">
            <path d="M4 4.500h19" stroke="#252423" />
            <path d="M4.500 9.500h23v7h-23zM4.500 20.500h23v7h-23z" fill="#117865" stroke="#111" strokeDasharray="2 1" />
          </svg>
        </div>
        <svg className="ml-[35px] h-8 w-8" viewBox="0 0 32 32" fill="none" stroke="#3b3a39" strokeWidth="1.200">
          <path d="M12 27.500H3.500V4.500h10L20 11M13.500 4.500V12H19" />
          <path d="M26.500 12L15 22l2.500 2.500zM15 22c-3 0-4 2-4 3.500S9 28 8 28c3 1 9 0 9.500-3.500z" fill="#f3f2f1" />
        </svg>
      </div>
      <svg className="h-[12px] w-[180px]" viewBox="0 1 180 12" fill="none" stroke="#8a8886">
        <path d="M0 12.500h16l8-8 8 8h148" />
      </svg>
      <div className="h-[207px]">
        <Gallery />
      </div>
      <div className="flex h-[27px] items-start gap-[5px] border-b border-[#e1dfdd] pt-[7px] pl-[13px]">
        <i className="h-[2px] w-[2px] bg-[#484644]" />
        <i className="h-[2px] w-[2px] bg-[#484644]" />
        <i className="h-[2px] w-[2px] bg-[#484644]" />
      </div>
      <div className="flex flex-col text-[11.5px] leading-4 whitespace-nowrap">
        <div className="mt-[10px] ml-[12px]">Values</div>
        <div className="mt-[5px] ml-[4px] h-[28px] w-[170px] border border-dashed border-[#c0bebc] bg-white pl-[10px] leading-[27px]">Add data fields here</div>
        <div className="mt-[11px] ml-[12px] font-semibold tracking-[-0.1px] text-[#484644]">Drill through</div>
        <div className="mt-[9px] ml-[12px] flex items-center justify-between pr-[22px]">
          Cross-report
          <span className="flex h-4 w-8 items-center gap-[1px] rounded-full border border-[#797775] bg-white pl-[4px] text-[9px] leading-none text-[#605e5c]">
            <i className="h-2 w-2 shrink-0 rounded-full bg-[#605e5c]" />
            Off
          </span>
        </div>
        <div className="mt-[11px] ml-[12px] flex items-center justify-between pr-[22px]">
          Keep all filters
          <span className="flex h-4 w-8 items-center gap-[1px] rounded-full bg-[#117865] pl-[5px] text-[9px] leading-none text-white">
            On
            <i className="h-2 w-2 shrink-0 rounded-full bg-white" />
          </span>
        </div>
        <div className="mt-[10px] ml-[4px] h-[26px] w-[170px] border border-dashed border-[#c0bebc] bg-white pl-[8px] leading-[25px]">Add drill-through fields here</div>
      </div>
    </section>
  );
}

export default function App() {
  return (
    <div className="flex h-[684px] w-[1204px] flex-col overflow-hidden bg-[#f3f2f1] font-['Open_Sans',sans-serif]">
      <Ribbon />
      <div className="flex h-[543px] shrink-0">
        <Rail />
        <main className="flex w-[963px] shrink-0 flex-col bg-white">
          <div className="flex h-[508px] shrink-0">
            <div className="relative w-[930px] shrink-0 overflow-hidden">
              <svg className="absolute top-0 left-0 h-[508px] w-[930px]" viewBox="41 128 930 508" fill="none" stroke="#605e5c" strokeWidth="2">
                <path d="M61 128v502" strokeDasharray="2 1.980" />
                <path d="M951 128v502M60 629H952" strokeDasharray="2 1.980" />
              </svg>
              {charts.map((c) => (
                <Chart key={c.title} {...c} />
              ))}
            </div>
            <FiltersPane />
          </div>
          <PageTabs />
        </main>
        <VizPane />
        <aside className="w-[18px] shrink-0 overflow-hidden">
          <h2 className="pt-[9px] pl-[8px] text-[14.4px] leading-5 font-semibold whitespace-nowrap text-[#252423]">Data</h2>
          <div className="mt-[16px] ml-[4px] h-[24px] w-[60px] rounded border border-[#b3b0ad] bg-white pl-[12px]">
            <svg className="mt-[6px] h-[9px] w-[9px]" viewBox="0 0 9 9" fill="none" stroke="#605e5c">
              <circle cx="4" cy="4" r="3.500" />
            </svg>
          </div>
          <svg className="mt-[15px] ml-[14px] h-[12px] w-[8px]" viewBox="0 0 8 12" fill="none" stroke="#a19f9d">
            <path d="M1 0l5 6-5 6" />
          </svg>
        </aside>
      </div>
      <footer className="flex h-[40px] shrink-0 border-t border-[#d2d0ce] text-[11px] leading-[24px] whitespace-nowrap text-[#605e5c]">
        <span className="w-[961px] shrink-0 pl-[4px]">Page 1 of 4</span>
        <svg className="h-[24px] w-[124px] shrink-0" viewBox="961 672 124 24" fill="none" stroke="#797775">
          <path d="M962 683.500h5M971 683.500h100M1021.500 681v5M1077 683.500h8M1081 679.500v8" />
          <path d="M1004 678v10" stroke="#484644" strokeWidth="4" />
        </svg>
        <span className="ml-[13px] w-[42px] shrink-0">69%</span>
        <svg className="mt-[6px] h-[12px] w-[16px] shrink-0" viewBox="0 0 16 12" fill="none" stroke="#797775">
          <path d="M.500 .500h15v11H.500zM3 6V3h3M13 6V3h-3" />
        </svg>
        <span className="ml-[14px]">Update available</span>
      </footer>
    </div>
  );
}
